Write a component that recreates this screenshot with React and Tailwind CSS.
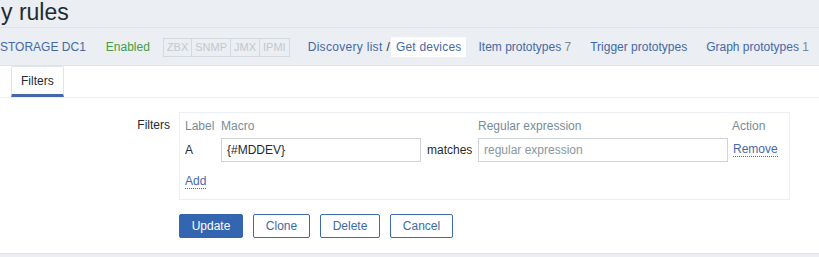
const LINK = "text-[#4569a8]";

function Tag({ children, last }) {
  return (
    <span className={`px-[3px] leading-[17px] border-[#d5d9de] border-y ${last ? "border-r" : ""} border-l`}>
      {children}
    </span>
  );
}

function Button({ children, primary, w }) {
  return (
    <button
      className={`${w} h-[24px] rounded-[2px] border text-[12px] ${
        primary ? "bg-[#3465b1] border-[#3465b1] text-white" : "bg-white border-[#3d6aa9] text-[#3d6aa9]"
      }`}
    >
      {children}
    </button>
  );
}

export default function App() {
  return (
    <div className="w-[819px] h-[257px] overflow-hidden bg-white text-[12px] text-[#1f2c33]" style={{ fontFamily: '"Liberation Sans", Arial, sans-serif' }}>
      <div className="bg-[#ebeef2] h-[28px] border-b border-[#dfe4e7]">
        <h1 className="text-[23px] leading-[24px] text-[#1f2c33] pl-[1px]">y rules</h1>
      </div>
      <div className="bg-[#ebeef2] h-[38px] border-b border-[#dfe4e7] flex items-center pt-[1px]">
        <span className={`${LINK}`}>STORAGE DC1</span>
        <span className="ml-[20px] text-[#429e47]">Enabled</span>
        <span className="ml-[13px] flex text-[11px] text-[#c3c8cf] bg-[#ebeef2]">
          <Tag>ZBX</Tag>
          <Tag>SNMP</Tag>
          <Tag>JMX</Tag>
          <Tag last>IPMI</Tag>
        </span>
        <span className={`ml-[18px] ${LINK} tracking-[0.3px]`}>Discovery list</span>
        <span className="ml-[4px] text-[#1f2c33]">/</span>
        <span className="ml-[1px] bg-white px-[5px] leading-[20px] text-[#4569a8] tracking-[0.2px]">Get devices</span>
        <span className={`ml-[12px] ${LINK}`}>
          Item prototypes <span className="text-[#7a8a96]">7</span>
        </span>
        <span className={`ml-[19px] ${LINK}`}>Trigger prototypes</span>
        <span className={`ml-[19px] ${LINK}`}>
          Graph prototypes <span className="text-[#7a8a96]">1</span>
        </span>
      </div>
      <div className="h-[32px] border-b border-[#ebeef2] flex items-end pl-[11px]">
        <div className="h-[31px] px-[9px] flex items-center border border-b-[3px] border-[#dfe4e7] border-b-[#4569a8] rounded-t-[2px] bg-white">
          Filters
        </div>
      </div>
      <div className="flex pt-[14px]">
        <div className="w-[170px] text-right pt-[4px]">Filters</div>
        <div className="ml-[9px] flex flex-col">
          <div className="w-[611px] h-[88px] border border-[#ebeef2] px-[5px] pt-[6px]">
            <div className="flex text-[#768d99] leading-[14px]">
              <span className="w-[36px]">Label</span>
              <span className="w-[257px]">Macro</span>
              <span className="w-[254px]">Regular expression</span>
              <span>Action</span>
            </div>
            <div className="flex items-center mt-[5px]">
              <span className="w-[36px]">A</span>
              <div className="w-[200px] h-[24px] border border-[#cfd4d8] px-[5px] flex items-center">{"{#MDDEV}"}</div>
              <span className="ml-[6px] w-[51px]">matches</span>
              <div className="w-[250px] h-[24px] border border-[#cfd4d8] px-[5px] flex items-center text-[#8a979f]">regular expression</div>
              <span className={`ml-[5px] ${LINK} border-b border-dotted border-[#4569a8] leading-[13px]`}>Remove</span>
            </div>
            <div className="mt-[10px]">
              <span className={`${LINK} border-b border-dotted border-[#4569a8] leading-[13px] inline-block`}>Add</span>
            </div>
          </div>
          <div className="flex gap-[10px] mt-[14px]">
            <Button primary w="w-[64px]">Update</Button>
            <Button w="w-[57px]">Clone</Button>
            <Button w="w-[60px]">Delete</Button>
            <Button w="w-[63px]">Cancel</Button>
          </div>
        </div>
      </div>
      <div className="mt-[15px] h-[10px] bg-[#ebeef2] border-t border-[#dfe4e7]" />
    </div>
  );
}
